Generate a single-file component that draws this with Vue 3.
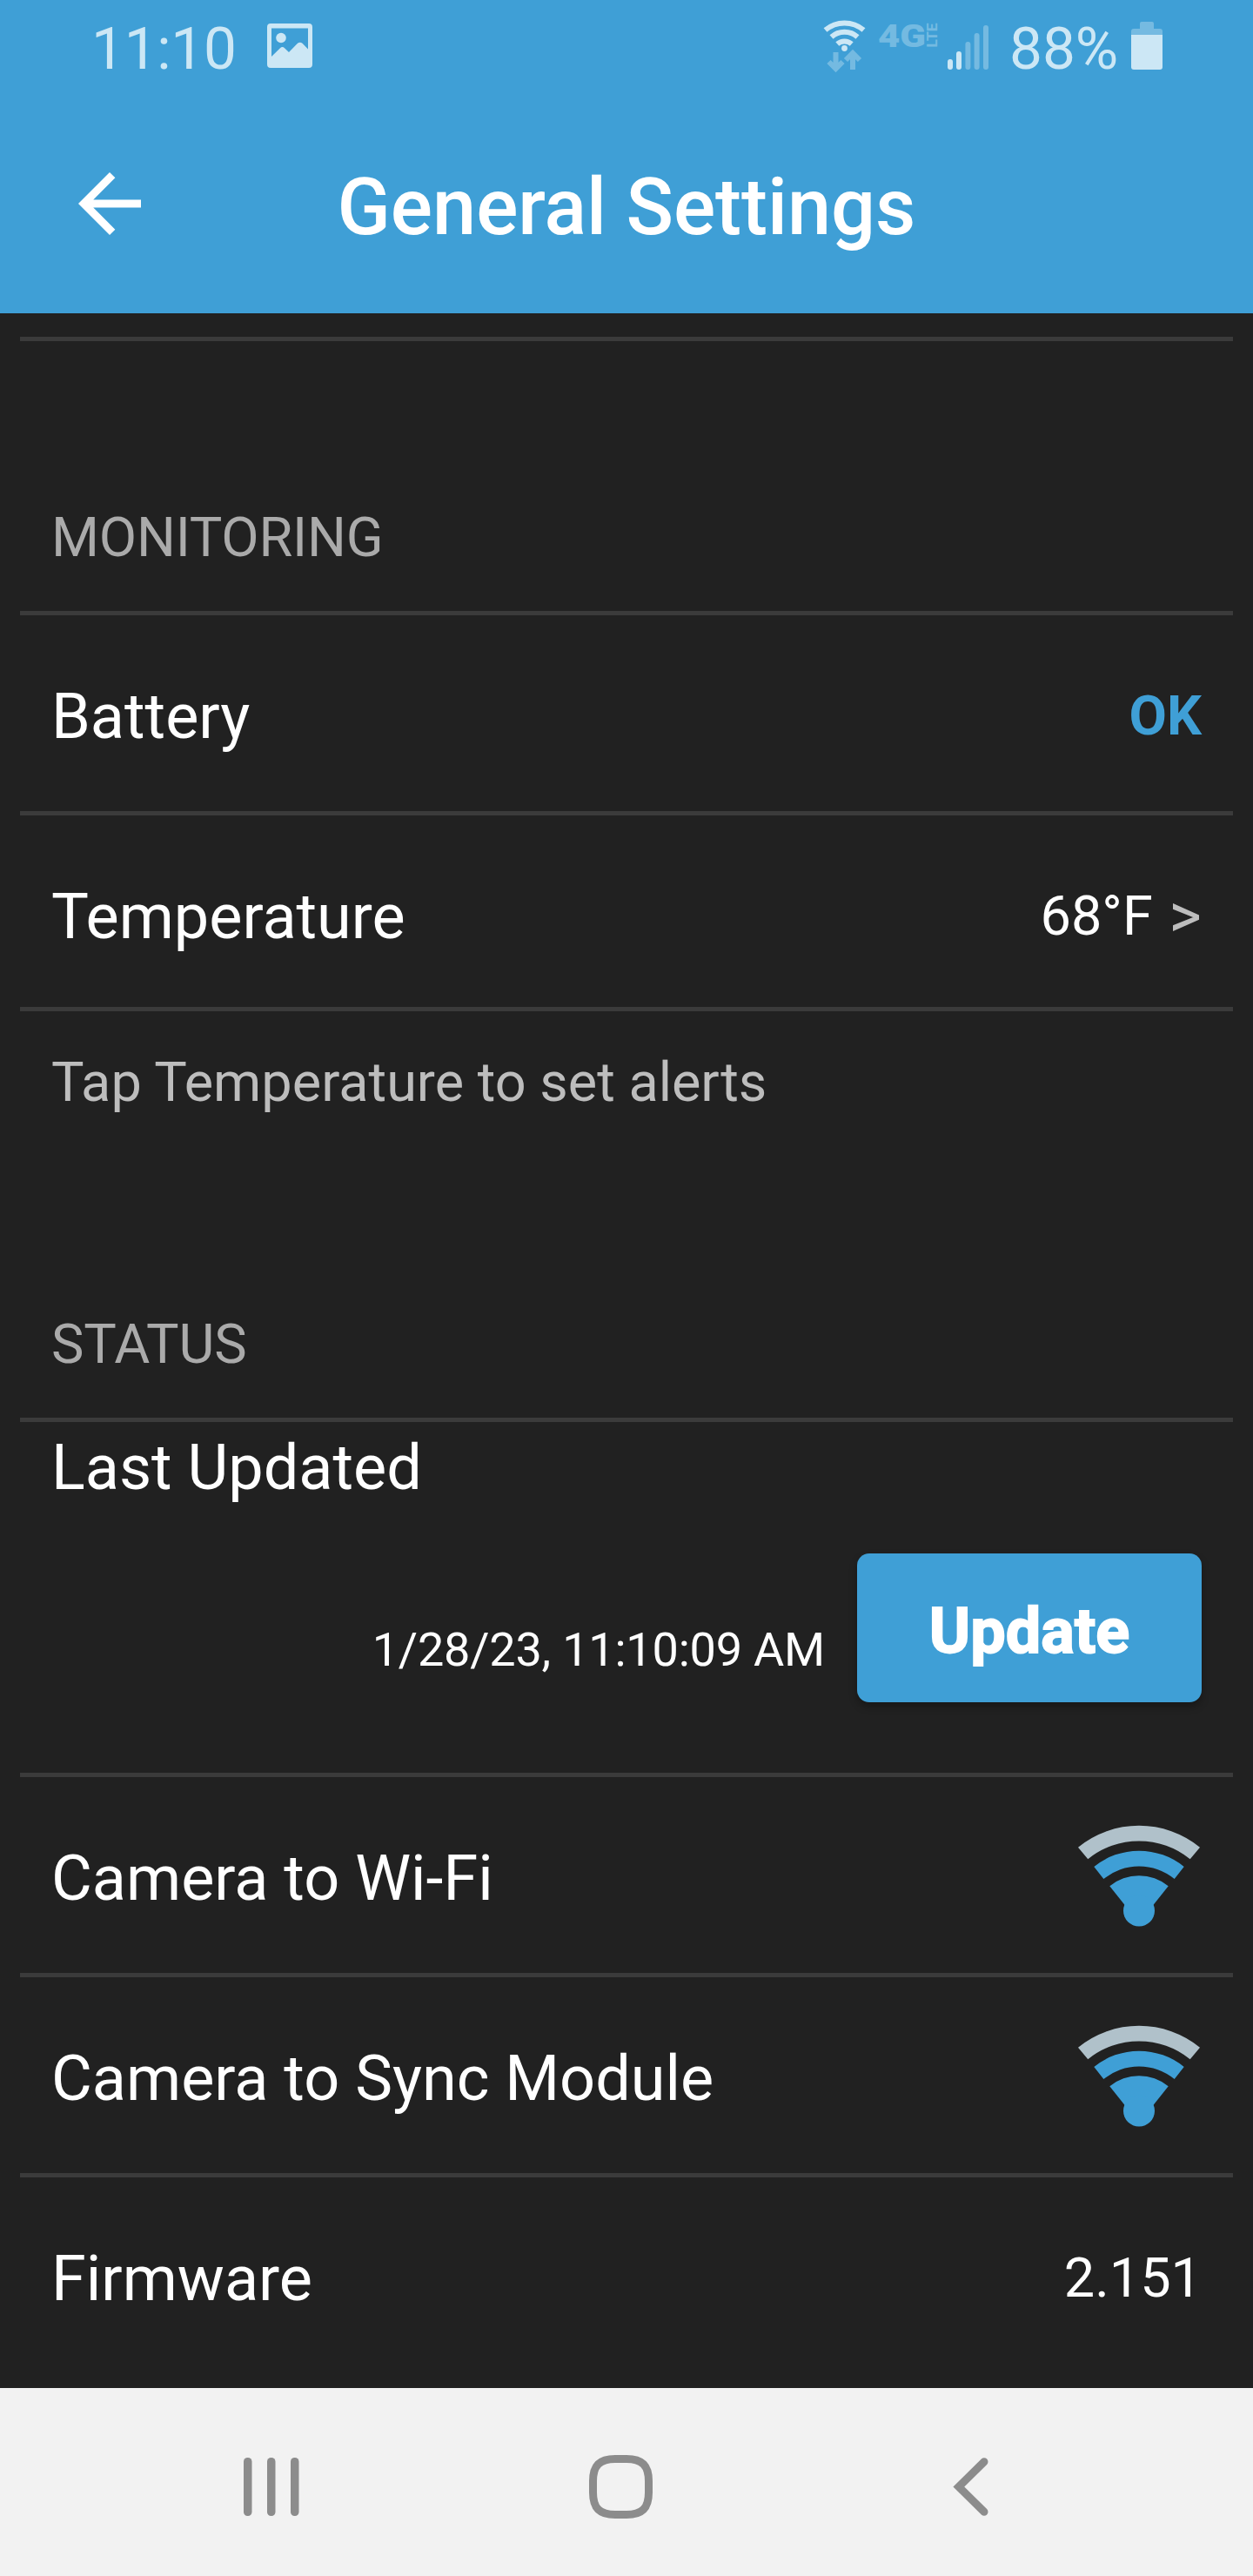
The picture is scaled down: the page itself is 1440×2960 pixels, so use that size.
<template>
  <div class="screen">
    <header class="header">
      <div class="status-bar">
        <span class="clock">{{ clock }}</span>
        <svg class="picture-icon" viewBox="0 0 52 51">
          <path fill-rule="evenodd" d="M4 0H48Q52 0 52 4V47Q52 51 48 51H4Q0 51 0 47V4Q0 0 4 0ZM5 5.5V38L15 28.2Q17.500 26 20 28.200L25 33L35 22.800Q37.800 20.500 40.500 22.800L47 29.500V5.500Z" />
          <circle cx="16" cy="16.500" r="5.800" />
        </svg>
        <svg class="network-icons" viewBox="0 0 200 70">
          <!-- Wi-Fi -->
          <g class="line" transform="translate(-20 0)">
            <path d="M28.500 24.500A34 34 0 0 1 72.500 24.500" stroke-width="6" />
            <path d="M35.500 32.500A22.500 22.500 0 0 1 65.500 32.500" stroke-width="6" />
            <path d="M42.300 40.500A12.500 12.500 0 0 1 58.700 40.500" stroke-width="6" />
          </g>
          <circle cx="30.500" cy="45.500" r="3.400" />
          <!-- data traffic -->
          <g class="line dim" stroke-width="6">
            <path d="M20.500 50V68M12.500 61L20.500 69L28.500 61" />
            <path d="M40 70V52M32 59L40 51L48 59" />
          </g>
          <text class="net dim" x="69" y="44" font-size="37" textLength="55" lengthAdjust="spacingAndGlyphs">4G</text>
          <text class="net lte dim" transform="translate(137 44.500) rotate(-90)" font-size="16.500" textLength="28" lengthAdjust="spacingAndGlyphs">LTE</text>
          <!-- signal strength -->
          <rect
            v-for="(bar, i) in signal"
            :key="i"
            :class="{ dim: i > 1 }"
            :x="bar.x"
            :y="70 - bar.h"
            width="6"
            :height="bar.h"
            rx="3"
          />
        </svg>
        <span class="percent">88%</span>
        <svg class="battery-icon" viewBox="0 0 36 55">
          <path class="dim" d="M10 8V2Q10 0 12 0H24Q26 0 26 2V8H33Q36 8 36 11V15H0V11Q0 8 3 8Z" />
          <path d="M0 15H36V52Q36 55 33 55H3Q0 55 0 52Z" />
        </svg>
      </div>
      <div class="app-bar">
        <svg class="back" viewBox="0 0 24 24">
          <path d="M20 11H7.830l5.590-5.590L12 4l-8 8 8 8 1.410-1.410L7.830 13H20v-2z" />
        </svg>
        <h1 class="title">General Settings</h1>
      </div>
    </header>

    <main class="content">
      <div class="spacer"></div>

      <h2 class="section-label">MONITORING</h2>
      <div class="row">
        <span class="label">Battery</span>
        <span class="value ok">OK</span>
      </div>
      <div class="row row-short">
        <span class="label">Temperature</span>
        <span class="value">68°F <span class="more">&gt;</span></span>
      </div>
      <p class="hint">Tap Temperature to set alerts</p>

      <h2 class="section-label section-status">STATUS</h2>
      <div class="row row-update">
        <span class="label">Last Updated</span>
        <div class="update-line">
          <span class="date">{{ lastUpdated }}</span>
          <button class="update-btn">Update</button>
        </div>
      </div>
      <div v-for="name in links" :key="name" class="row">
        <span class="label">{{ name }}</span>
        <svg class="wifi" viewBox="0 0 140 117">
          <path class="weak" d="M0 25.700A111 111 0 0 1 140 25.700L128.700 39.300A93 93 0 0 0 11.300 39.300Z" />
          <path d="M18.300 48A82 82 0 0 1 121.700 48L110.700 62A64 64 0 0 0 29.300 62Z" />
          <path d="M36.300 70.300A53 53 0 0 1 103.700 70.300L86 92.500H54Z" />
          <circle cx="70" cy="98.500" r="18" />
        </svg>
      </div>
      <div class="row row-last">
        <span class="label">Firmware</span>
        <span class="value">{{ firmware }}</span>
      </div>
    </main>

    <nav class="nav-bar">
      <svg class="recents" viewBox="0 0 64 67">
        <rect x="0" y="0" width="9.500" height="67" rx="4.500" />
        <rect x="27" y="0" width="9.500" height="67" rx="4.500" />
        <rect x="54" y="0" width="9.500" height="67" rx="4.500" />
      </svg>
      <svg class="home" viewBox="0 0 73 73">
        <path d="M30 4.500H43C61 4.500 68.500 12 68.500 30V43C68.500 61 61 68.500 43 68.500H30C12 68.500 4.500 61 4.500 43V30C4.500 12 12 4.500 30 4.500Z" />
      </svg>
      <svg class="nav-back" viewBox="0 0 41 67">
        <path d="M36 4.700L6.800 33.500L36 62.300" />
      </svg>
    </nav>
  </div>
</template>

<script setup>
import { ref } from 'vue';

const clock = ref('11:10');
const lastUpdated = ref('1/28/23, 11:10:09 AM');
const firmware = ref('2.151');
const links = ['Camera to Wi-Fi', 'Camera to Sync Module'];

const signal = [
  { x: 149, h: 12 },
  { x: 159, h: 21 },
  { x: 169.4, h: 32 },
  { x: 179.6, h: 42 },
  { x: 190, h: 51 }
];
</script>

<style>
body { background: #212121; }
</style>

<style scoped>
.screen {
  display: flex;
  flex-direction: column;
  width: 1440px;
  height: 2960px;
  overflow: hidden;
  background: #212121;
  color: #fff;
  font-family: Roboto, "Liberation Sans", sans-serif;
}

/* --- header --- */
.header { flex: none; height: 360px; background: #3f9fd6; }
.status-bar {
  display: flex;
  align-items: flex-start;
  box-sizing: border-box;
  height: 108px;
  padding: 15px 104px 0 105px;
  color: #cce7f5;
  fill: #cce7f5;
}
.clock, .percent { margin-top: 1px; font-size: 67.5px; line-height: 80px; white-space: nowrap; }
.clock { width: 202px; letter-spacing: -0.3px; }
.picture-icon { width: 52px; height: 51px; margin-top: 12px; }
.network-icons { width: 200px; height: 70px; margin: -5px 0 0 auto; overflow: visible; }
.line { fill: none; stroke: #cce7f5; }
.dim { opacity: 0.38; }
.net { font-family: Roboto, sans-serif; font-weight: 900; }
.lte { font-weight: 700; }
.percent { margin-left: 20px; width: 140px; }
.battery-icon { width: 36px; height: 55px; margin-top: 10px; }

.app-bar {
  display: grid;
  grid-template-columns: 180px 1fr 180px;
  align-items: start;
  padding-top: 72px;
}
.back { width: 108px; height: 108px; margin-left: 72px; fill: #fff; }
.title {
  margin: 5px 0 0;
  font-size: 90px;
  line-height: 108px;
  font-weight: 500;
  text-align: center;
  white-space: nowrap;
}

/* --- settings list --- */
.content {
  flex: 1;
  display: flex;
  flex-direction: column;
  padding: 0 23px;
  overflow: hidden;
}
.spacer { flex: none; height: 27px; border-bottom: 5px solid #3b3b3b; }
.section-label {
  flex: none;
  margin: 0;
  padding: 188px 36px 46px;
  border-bottom: 5px solid #3b3b3b;
  color: #aaa;
  font-size: 63px;
  line-height: 76px;
  font-weight: 400;
  letter-spacing: -0.2px;
}
.section-status { padding-top: 225px; }
.row {
  flex: none;
  display: flex;
  justify-content: space-between;
  align-items: flex-start;
  height: 225px;
  padding: 0 36px;
  border-bottom: 5px solid #3b3b3b;
}
.row-short { height: 220px; }
.row-last { border-bottom: none; }
.label { margin-top: 75px; font-size: 72px; line-height: 84px; }
.value { margin-top: 78px; font-size: 63px; line-height: 76px; white-space: pre; }
.ok { color: #3f9fd6; font-weight: 700; }
.more { margin-left: 3px; color: #bdbdbd; font-size: 72px; line-height: 0; vertical-align: -3px; }
.hint {
  flex: none;
  margin: 44px 36px 0;
  color: #bdbdbd;
  font-size: 63px;
  line-height: 76px;
}

.row-update { flex-direction: column; justify-content: flex-start; height: 403px; }
.row-update .label { margin-top: 11px; }
.update-line { display: flex; align-items: flex-start; align-self: flex-end; margin-top: 56px; }
.date { margin: 78px 37px 0 0; font-size: 54px; line-height: 66px; letter-spacing: -0.2px; }
.update-btn {
  width: 396px;
  height: 171px;
  padding: 8px 0 0;
  border: none;
  border-radius: 14px;
  background: #3f9fd6;
  box-shadow: 0 5px 10px rgba(0, 0, 0, 0.3);
  color: #fff;
  font-family: inherit;
  font-size: 72px;
  font-weight: 700;
  -webkit-text-stroke: 1.8px #fff;
}
.wifi { width: 140px; height: 117px; margin: 54.500px 2px 0 0; fill: #3f9fd6; }
.weak { fill: #b0c1ca; }

/* --- navigation bar --- */
.nav-bar {
  flex: none;
  display: flex;
  align-items: center;
  box-sizing: border-box;
  height: 216px;
  padding: 10px 0 0 280px;
  background: #f2f2f2;
  fill: #8c8c8c;
}
.recents { width: 64px; height: 67px; }
.home { width: 73px; height: 73px; margin: 0 345px 0 333px; fill: none; stroke: #8c8c8c; stroke-width: 9; }
.nav-back { width: 41px; height: 67px; fill: none; stroke: #8c8c8c; stroke-width: 9; stroke-linecap: round; }
</style>
